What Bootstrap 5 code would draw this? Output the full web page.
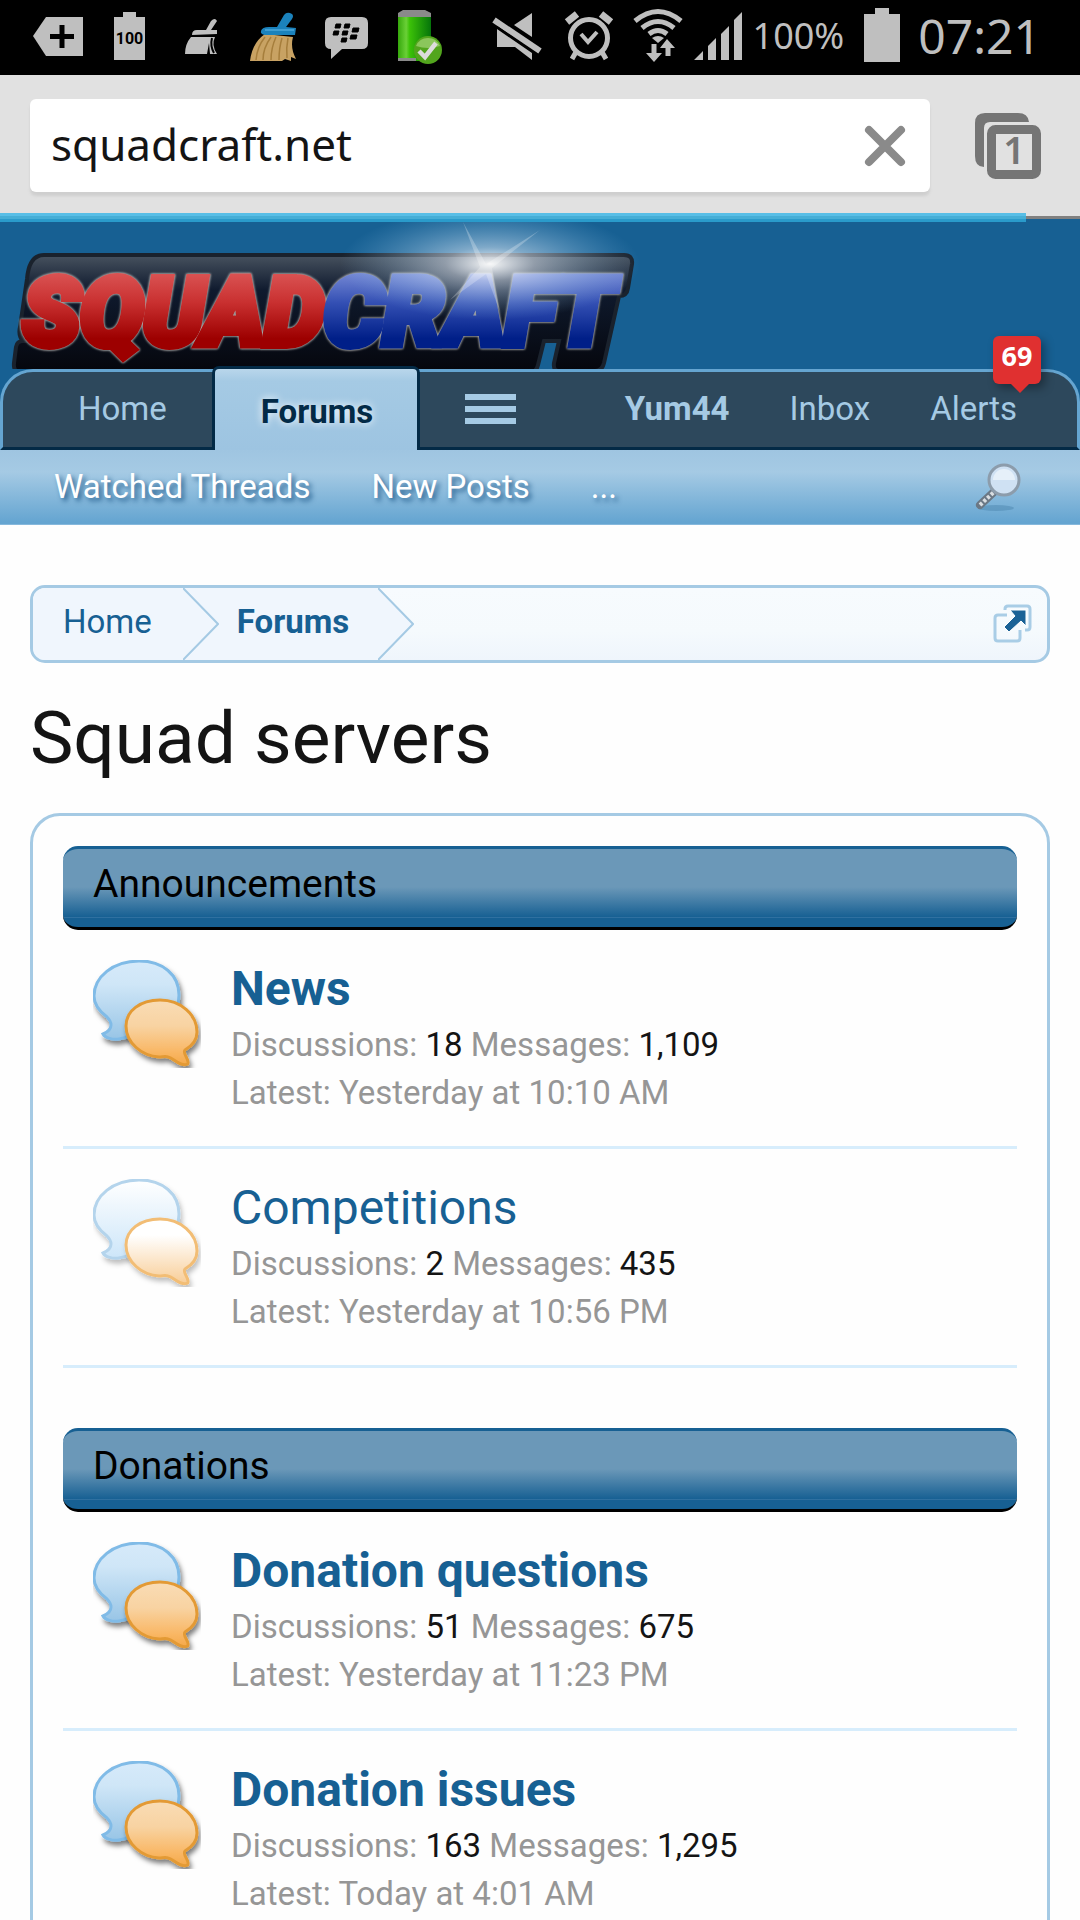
<!DOCTYPE html>
<html lang="en">
<head>
<meta charset="utf-8">
<meta name="viewport" content="width=device-width, initial-scale=1">
<title>Squad servers</title>
<link rel="stylesheet" href="https://cdn.jsdelivr.net/npm/bootstrap@5.3.0/dist/css/bootstrap.min.css">
<style>
  :root { --deep: #176093; --sky: #a5cae4; --mid: #65a5d1; --navy: #032a46; }
  body { font-family: Roboto, "Liberation Sans", sans-serif; font-size: 33px; line-height: 48px; color: #141414; background: #fefefe; }
  a { text-decoration: none; color: var(--deep); }
  .device-status { height: 75px; background: #000; color: #bfbfbf; padding: 0 39px 0 22px; font-family: "Noto Sans", sans-serif; }
  .device-status svg { flex: none; display: block; }
  .pct, .clock { padding-bottom: 4px; }
  .pct { font-size: 36px; margin: 0 20px 0 8px; } .clock { font-size: 48px; margin-left: 18px; }
  .browser-bar { background: #e1e1e1; padding: 24px 39px 21px 30px; gap: 45px; }
  .url-box { height: 93px; background: #fff; border-radius: 6px; box-shadow: 0 4px 3px #cfcfcf; padding-right: 24px; }
  .url-box input { font: 44px "Noto Sans", sans-serif; color: #141414; padding: 0 0 4px 21px; min-width: 0; height: 84px; }
  .url-box input:focus { color: #141414; }
  .load-track { height: 9px; background: linear-gradient(#e1e1e1 3px, #808080 3px 6px, var(--deep) 6px); }
  .load-fill { height: 9px; background: linear-gradient(#58bee6 0 3px, #45aed6 3px 6px, #2a9bcb 6px); }
  .site-head { background: var(--deep); }
  .logo-link { height: 147px; }
  .logo-letters { font: italic 900 94px Roboto, "Liberation Sans", sans-serif; filter: drop-shadow(0 0 1px #bbb) drop-shadow(0 0 1px #888); }
  .tab-strip { background: #2d485c; border: 3px solid var(--mid); border-bottom-color: var(--navy); border-radius: 33px 33px 0 0; height: 81px; padding-right: 30px; }
  .tab-strip a { color: var(--sky); padding-bottom: 2px; }
  .tab-strip .tab-home { padding-left: 75px; padding-right: 45px; }
  .tab-strip .tab-on { color: var(--navy); margin: -6px 0 -3px; padding: 4px 44px 0 46px; border: 3px solid var(--navy); border-bottom: 0; border-radius: 7px 7px 0 0; background: linear-gradient(#b9d6eb, #a5cae4 12px, #9dc4e1); text-shadow: 0 0 8px #fff; }
  .tab-more { padding: 0 45px; }
  .tab-user { padding: 0 30px; }
  .alert-bubble { right: 6px; top: -36px; width: 48px; height: 48px; background: #e03030; color: #fff; border-radius: 6px; font: bold 27px/40px "Open Sans", sans-serif; text-align: center; box-shadow: 4px 4px 10px rgba(0,0,0,.35); }
  .alert-bubble::after { content: ""; position: absolute; left: 18px; top: 100%; border: 9px solid transparent; border-top-color: #e03030; border-bottom: 0; }
  .sub-strip { height: 75px; padding: 0 58px 0 24px; background: linear-gradient(#9fc5e1, #a5cae4 22px, #65a5d1 72px, #65a5d1 74px, #86b8dc 74px); }
  .sub-strip a { color: #fff; padding: 0 31px 2px 30px; text-shadow: 3px 3px 5px rgba(10,70,120,.75); }
  .sub-strip button, .crumbs button { background: none; border: 0; padding: 0 0 2px; }
  .crumbs { height: 78px; border: 3px solid var(--sky); border-radius: 15px; background: linear-gradient(#f7fbfe, #f5fafd 60%, #eff5fc); padding-right: 15px; overflow: hidden; }
  .crumb { background: #f0f6fd; padding: 0 31px 4px 30px; }
  .crumb + .crumb { padding-left: 54px; padding-right: 29px; }
  .crumb svg { position: absolute; left: 100%; top: 0; z-index: 1; }
  .page-body { padding: 60px 30px; }
  .page-title { font-size: 73px; line-height: 90px; margin: 30px 0; font-weight: 400; }
  .forum-box { border: 3px solid var(--sky); border-radius: 30px; padding: 30px; }
  .forum-group + .forum-group { margin-top: 60px; }
  .group-head { font-size: 39px; line-height: 71px; height: 84px; margin: 0; padding-left: 30px; font-weight: 400; color: #000; border-top: 3px solid var(--deep); border-bottom: 3px solid #000; border-radius: 15px; background: linear-gradient(#6b98b8 38px, #176093 68px, #2f70a0 68px 69px, #176093 69px); background-origin: padding-box; }
  .forum-row { border-bottom: 3px solid #d7edfc; padding: 30px 30px 29px; gap: 30px; }
  .forum-row h3 { font-size: 48px; line-height: 58px; margin: 0 0 3px; font-weight: 400; }
  .forum-row p { margin: 0; color: #969696; }
  .forum-row b { color: #141414; font-weight: 400; }
</style>
<script src="https://cdn.jsdelivr.net/npm/bootstrap@5.3.0/dist/js/bootstrap.bundle.min.js"></script>
</head>
<body>
<svg width="0" height="0" class="position-absolute" aria-hidden="true">
  <defs>
    <linearGradient id="blueFill" x2="0" y2="1"><stop stop-color="#d6eafa"/><stop offset=".3" stop-color="#cfe6f7"/><stop offset="1" stop-color="#98c5e6"/></linearGradient>
    <linearGradient id="orangeFill" x2="0" y2="1"><stop stop-color="#f9dcb5"/><stop offset=".4" stop-color="#f8d3a2"/><stop offset=".8" stop-color="#f9b765"/><stop offset="1" stop-color="#f5a94a"/></linearGradient>
    <linearGradient id="blueRead" x2="0" y2="1"><stop stop-color="#fff"/><stop offset="1" stop-color="#cde6f9"/></linearGradient>
    <linearGradient id="orangeRead" x2="0" y2="1"><stop offset=".25" stop-color="#fff"/><stop offset="1" stop-color="#f8cd96"/></linearGradient>
    <filter id="drop" x="-20%" y="-20%" width="150%" height="150%"><feDropShadow dx="2" dy="4" stdDeviation="2.5" flood-color="#000" flood-opacity=".5"/></filter>
    <filter id="dropSoft" x="-20%" y="-20%" width="150%" height="150%"><feDropShadow dx="2" dy="4" stdDeviation="2.5" flood-color="#000" flood-opacity=".25"/></filter>
    <path id="backShape" d="M46 1C70 1 86 15 86 35c0 19-14 32-34 36-9 2-14 6-26 8-6 1-14-1-16-5 5-2 8-5 8-9 0-3-1-5-4-8C6 51 1 45 1 36 1 17 20 1 46 1z"/>
    <path id="frontShape" d="M67 40c21 0 37 15 37 32 0 8-5 14-12 18-3 3 4 9 3 13 0 2-4 2-7 1-6-2-8-6-13-7-3-1-5 0-9 0C49 96 33 83 33 66c0-15 14-26 34-26z"/>
    <symbol id="unread" viewBox="0 0 108 108"><use href="#backShape" fill="url(#blueFill)" stroke="#80bbe7" stroke-width="3" filter="url(#drop)"/><use href="#frontShape" fill="url(#orangeFill)" stroke="#e39a34" stroke-width="3" filter="url(#drop)"/></symbol>
    <symbol id="read" viewBox="0 0 108 108"><use href="#backShape" fill="url(#blueRead)" stroke="#b4d4ec" stroke-width="3" filter="url(#dropSoft)"/><use href="#frontShape" fill="url(#orangeRead)" stroke="#f2bd74" stroke-width="3" filter="url(#dropSoft)"/></symbol>
  </defs>
</svg>
<div class="vh-100 overflow-hidden">
  <div class="device-status d-flex align-items-center">
    <svg width="72" height="75" fill="#bfbfbf"><path d="M11 36 24 17H61V56H24z"/><path d="M28 36.500H52M40 25V48" stroke="#000" stroke-width="5"/></svg>
    <svg width="72" height="75" fill="#bfbfbf"><path d="M20 17h9v-5h13v5h9v43H20z"/><text x="35.500" y="44" font-size="16" font-weight="700" fill="#000" text-anchor="middle" font-family="Roboto, sans-serif">100</text></svg>
    <svg width="72" height="75" fill="#bfbfbf"><path d="M45 21q4-4 6 0l-6 9h6v4l-25 1q0-5 5-5h9z"/><path d="M25 37h24q-4 8 2 17h-7l-1-11-2 11H19q0-10 6-17z"/><path d="M46 38q-2 8 2 15" stroke="#000" stroke-width="2" fill="none"/></svg>
    <svg width="72" height="75"><path d="M27 34 55 37Q52 48 58 59l-5-2v4l-6-2-3 2H12Q14 43 27 34z" fill="#c8a263"/><path d="M27 37Q19 47 18 60M33 37Q25 48 25 60M38 37Q33 48 33 60M44 38q-3 10-3 22M50 38q-2 10-1 20" stroke="#a67e3c" stroke-width="1.500" fill="none"/><path d="M27 35q-5-1-4-4 1-4 8-4h8l7-12q3-4 8-1 2 2 0 5l-6 8 10 1-1 7z" fill="#1b82bc"/><path d="M27 30 56 30" stroke="#3e9ed3" stroke-width="2"/></svg>
    <svg width="72" height="75" fill="#bfbfbf"><path d="M21 17H52q6 0 6 6V43q0 6-6 6H32L21 59V49q-6 0-6-6V23q0-6 6-6z"/><path d="M26 24h5l-1 4h-5zM35 24h5l-1 4h-5zM24 31h5l-1 4h-5zM33 31h5l-1 4h-5zM43 28h6l-1 4h-6zM41 35h6l-1 4h-6zM32 38h5l-1 4h-5z" fill="#000" stroke="#000" stroke-linejoin="round"/></svg>
    <svg width="72" height="75"><defs><linearGradient id="cell"><stop stop-color="#35a80b"/><stop offset=".25" stop-color="#6ad037"/><stop offset=".35" stop-color="#3cc208"/><stop offset="1" stop-color="#05740a"/></linearGradient></defs><path d="M16 13H49V61H16z" fill="url(#cell)"/><path d="M16 13l5-3h22l6 3v4H16zM16 58h18v3H16z" fill="#8a8a8a"/><circle cx="46" cy="50" r="14" fill="#52a51d"/><path d="M34 46a13 13 0 0 1 24 0Q46 50 34 46z" fill="#8bc65c"/><path d="M37 51l6 6L54 43" stroke="#dcdcdc" stroke-width="4.500" fill="none"/></svg>
    <svg class="ms-auto" width="72" height="75" fill="#bfbfbf"><path d="M51 13V37L33 25zM16 29 51 53V60L34 47H16z"/><path d="M13 20 59 51" stroke="#bfbfbf" stroke-width="6"/><path d="M16 27 55 54" stroke="#000" stroke-width="2"/></svg>
    <svg width="72" height="75" fill="none" stroke="#bfbfbf"><circle cx="36" cy="38" r="18.500" stroke-width="5"/><path d="M14 22 24 14M48 14 58 22" stroke-width="7"/><path d="M23 52 19 59M49 52 53 59" stroke-width="5"/><path d="M28 34 35 42 44 32" stroke-width="4"/></svg>
    <svg width="66" height="75" fill="none" stroke="#bfbfbf" stroke-width="5"><path d="M10 21q23-19 46 0M17 28q16-13 32 0M24 34q9-7 18 0"/><path d="M27 38q6-4 12 0l-6 5z" fill="#bfbfbf" stroke="none"/><path d="M29 44v10M43 56V47"/><path d="M21 53h16l-8 9zM35 48h15L42 39z" fill="#bfbfbf" stroke="none"/></svg>
    <svg width="54" height="75" fill="#bfbfbf"><path d="M3 60 12 51V60zM17 60V46L25 38V60zM30 60V34L38 26V60zM43 60V20L51 12V60z"/></svg>
    <span class="pct">100%</span>
    <svg width="36" height="75" fill="#bfbfbf"><path d="M0 14h11V8h14v6h11v48H0z"/></svg>
    <span class="clock">07:21</span>
  </div>

  <form class="browser-bar d-flex align-items-center">
    <div class="url-box d-flex align-items-center flex-grow-1">
      <input class="form-control border-0 shadow-none bg-transparent" type="text" value="squadcraft.net" aria-label="Address">
      <button type="button" class="btn p-0 border-0" aria-label="Clear"><svg class="d-block" width="42" height="44" stroke="#8a8a8a" stroke-width="8" stroke-linecap="round"><path d="M5 6 37 38M37 6 5 38"/></svg></button>
    </div>
    <button type="button" class="btn p-0 border-0" aria-label="Tabs"><svg class="d-block" width="66" height="66"><path d="M9 54Q0 54 0 43V10Q0 0 10 0H43q10 0 11 9H15q-6 0-6 6z" fill="#757575"/><rect x="16.500" y="16.500" width="45" height="45" rx="4" fill="none" stroke="#757575" stroke-width="9"/><text x="39" y="51" font-size="38" font-weight="600" text-anchor="middle" fill="#757575" font-family="Noto Sans, sans-serif">1</text></svg></button>
  </form>
  <div class="load-track"><div class="load-fill" style="width:95%"></div></div>

  <header>
    <div class="site-head">
      <a class="logo-link d-block overflow-hidden" href="#" aria-label="SquadCraft">
        <svg class="d-block" width="660" height="147">
          <defs>
            <linearGradient id="redLetters" gradientUnits="userSpaceOnUse" x1="0" y1="40" x2="0" y2="130"><stop stop-color="#e06060"/><stop offset=".45" stop-color="#c93030"/><stop offset=".85" stop-color="#9d0000"/></linearGradient>
            <linearGradient id="blueLetters" gradientUnits="userSpaceOnUse" x1="0" y1="40" x2="0" y2="130"><stop stop-color="#8c9ce0"/><stop offset=".45" stop-color="#3450b4"/><stop offset=".85" stop-color="#001f88"/></linearGradient>
            <linearGradient id="plate" x2="0" y2="1"><stop stop-color="#47525f"/><stop offset=".3" stop-color="#0f1a2e"/><stop offset="1" stop-color="#05060c"/></linearGradient>
            <radialGradient id="flare"><stop stop-color="#fff" stop-opacity=".95"/><stop offset=".3" stop-color="#e8f3ff" stop-opacity=".5"/><stop offset="1" stop-color="#8fc4ea" stop-opacity="0"/></radialGradient>
          </defs>
          <path d="M44 33H624q9 0 8 9l-4 24q-1 8-9 8l-15 67q-2 8-9 8h-36q-6 0-5-8l5-22h-15l-6 24q-2 8-9 8H22q-9 0-8-10l2-16q1-6 7-6-5-5-3-14l7-48q2-24 17-24z" fill="url(#plate)" stroke="#1a222d" stroke-width="4"/>
          <text class="logo-letters" x="23" y="123" stroke-width="8" stroke-linejoin="miter" paint-order="stroke"><tspan fill="url(#redLetters)" stroke="url(#redLetters)">SQUAD</tspan><tspan fill="url(#blueLetters)" stroke="url(#blueLetters)">CRAFT</tspan></text>
          <ellipse cx="490" cy="42" rx="150" ry="56" fill="url(#flare)"/><path d="M463 0 486 42 540 8 492 46 500 90 486 52 450 78 480 45z" fill="#fff" opacity=".25"/>
        </svg>
      </a>
      <nav class="tab-strip d-flex align-items-stretch">
        <a class="tab-home d-flex align-items-center" href="#">Home</a>
        <a class="tab-on d-flex align-items-center fw-bold" href="#" aria-current="page">Forums</a>
        <a class="tab-more d-flex align-items-center" href="#" aria-label="Menu"><svg width="51" height="30" fill="#a5cae4"><path d="M0 0H51V6H0zM0 12H51V18H0zM0 24H51V30H0z"/></svg></a>
        <a class="tab-user d-flex align-items-center fw-bold ms-auto" href="#">Yum44</a>
        <a class="tab-user d-flex align-items-center" href="#">Inbox</a>
        <a class="tab-user d-flex align-items-center position-relative" href="#">Alerts<span class="alert-bubble position-absolute">69</span></a>
      </nav>
    </div>
    <nav class="sub-strip d-flex align-items-center">
      <a href="#">Watched Threads</a><a href="#">New Posts</a><a href="#">...</a>
      <button type="button" class="ms-auto" aria-label="Search"><svg class="d-block" width="48" height="48"><ellipse cx="22" cy="45" rx="18" ry="3" fill="#4a82ab" opacity=".45"/><path d="M6 42 22 27" stroke="#6b7885" stroke-width="8" stroke-linecap="round"/><path d="M6 42 20 29" stroke="#d9dee2" stroke-width="4" stroke-dasharray="3 2"/><circle cx="30" cy="17" r="15" fill="#cfe1f3" stroke="#8c9cab" stroke-width="3"/><path d="M19 17a11 11 0 0 1 22 0z" fill="#e6f0f9"/></svg></button>
    </nav>
  </header>

  <main class="page-body">
    <nav class="crumbs d-flex align-items-stretch" aria-label="Breadcrumb">
      <a class="crumb d-flex align-items-center position-relative" href="#">Home<svg width="36" height="72"><path d="M0 0 35 36 0 72" fill="#f0f6fd" stroke="#a5cae4" stroke-width="2"/></svg></a>
      <a class="crumb d-flex align-items-center position-relative fw-bold" href="#">Forums<svg width="36" height="72"><path d="M0 0 35 36 0 72" fill="#f0f6fd" stroke="#a5cae4" stroke-width="2"/></svg></a>
      <button type="button" class="ms-auto" aria-label="Open quick navigation"><svg class="d-block" width="39" height="39" fill="none" stroke="#a9cde6" stroke-width="3"><path d="M14 11H5q-3 0-3 3V34q0 3 3 3H24q3 0 3-3V26"/><path d="M12 6V5q0-3 3-3H34q3 0 3 3V23q0 3-3 3H32"/><path d="M17 6H33V22L28 17 16 28 11 23 22 12z" fill="#1b6296" stroke="#fff" stroke-width="1"/></svg></button>
    </nav>
    <h1 class="page-title">Squad servers</h1>
    <div class="forum-box">
      <section class="forum-group">
        <h2 class="group-head">Announcements</h2>
        <div class="forum-row d-flex"><svg class="flex-shrink-0" width="108" height="108"><use href="#unread"/></svg><div><h3><a class="fw-bold" href="#">News</a></h3><p>Discussions: <b>18</b> Messages: <b>1,109</b></p><p>Latest: Yesterday at 10:10 AM</p></div></div>
        <div class="forum-row d-flex"><svg class="flex-shrink-0" width="108" height="108"><use href="#read"/></svg><div><h3><a href="#">Competitions</a></h3><p>Discussions: <b>2</b> Messages: <b>435</b></p><p>Latest: Yesterday at 10:56 PM</p></div></div>
      </section>
      <section class="forum-group">
        <h2 class="group-head">Donations</h2>
        <div class="forum-row d-flex"><svg class="flex-shrink-0" width="108" height="108"><use href="#unread"/></svg><div><h3><a class="fw-bold" href="#">Donation questions</a></h3><p>Discussions: <b>51</b> Messages: <b>675</b></p><p>Latest: Yesterday at 11:23 PM</p></div></div>
        <div class="forum-row d-flex"><svg class="flex-shrink-0" width="108" height="108"><use href="#unread"/></svg><div><h3><a class="fw-bold" href="#">Donation issues</a></h3><p>Discussions: <b>163</b> Messages: <b>1,295</b></p><p>Latest: Today at 4:01 AM</p></div></div>
      </section>
    </div>
  </main>
</div>
</body>
</html>
